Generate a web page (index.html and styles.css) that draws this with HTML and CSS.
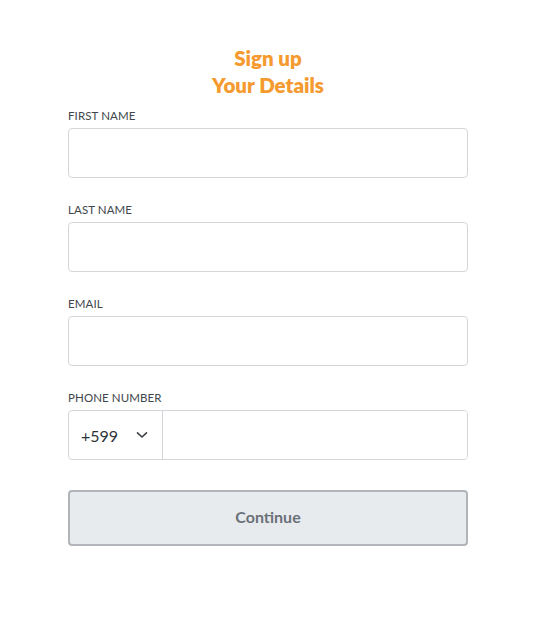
FILE: index.html
```html
<!DOCTYPE html>
<html lang="en">
<head>
<meta charset="utf-8">
<title>Sign up</title>
<link rel="stylesheet" href="styles.css">
</head>
<body>
<main class="page">
  <h1 class="title">Sign up<br>Your Details</h1>
  <form class="form">
    <div class="field">
      <label class="label" for="fn">FIRST NAME</label>
      <input class="input" id="fn" type="text">
    </div>
    <div class="field">
      <label class="label" for="ln">LAST NAME</label>
      <input class="input" id="ln" type="text">
    </div>
    <div class="field">
      <label class="label" for="em">EMAIL</label>
      <input class="input" id="em" type="email">
    </div>
    <div class="field">
      <label class="label" for="ph">PHONE NUMBER</label>
      <div class="phone">
        <div class="country">
          <span class="code">+599</span>
          <svg class="chev" width="12" height="8" viewBox="0 0 12 8"><path d="M1.5 1.8 L6 6 L10.5 1.8" fill="none" stroke="#3b4046" stroke-width="1.6" stroke-linecap="round" stroke-linejoin="round"/></svg>
        </div>
        <input class="phone-input" id="ph" type="tel">
      </div>
    </div>
    <button class="btn" type="button">Continue</button>
  </form>
</main>
</body>
</html>
```
FILE: styles.css
```css
* { box-sizing: border-box; }
body {
  margin: 0;
  background: #fff;
  font-family: Lato, "Noto Sans", sans-serif;
  color: #3b4046;
}
.page {
  padding: 45px 72px 0 68px;
}
.title {
  margin: 0;
  text-align: center;
  font-size: 20.5px;
  line-height: 27px;
  font-weight: 800;
  color: #f59a2f;
}
.form {
  display: flex;
  flex-direction: column;
  gap: 24px;
  margin-top: 9px;
}
.field {
  display: flex;
  flex-direction: column;
  gap: 4px;
}
.label {
  font-size: 11.5px;
  line-height: 16px;
  color: #41464c;
  letter-spacing: 0.1px;
}
.input {
  height: 50px;
  border: 1px solid #d3d6da;
  border-radius: 4px;
  background: #fff;
  font: inherit;
  outline: none;
}
.phone {
  display: flex;
  height: 50px;
  border: 1px solid #d3d6da;
  border-radius: 4px;
  overflow: hidden;
}
.country {
  width: 94px;
  flex: none;
  display: flex;
  align-items: center;
  justify-content: space-between;
  padding: 0 14px 0 12px;
  border-right: 1px solid #d3d6da;
}
.code {
  font-size: 16px;
  color: #2f3439;
}
.chev { display: block; }
.phone-input {
  flex: 1;
  border: 0;
  outline: none;
  font: inherit;
}
.btn {
  margin-top: 6px;
  height: 56px;
  padding: 0 0 3px;
  border: 2px solid #b1b5b9;
  border-radius: 4px;
  background: #e8ebee;
  color: #6b7178;
  font-family: Lato, "Noto Sans", sans-serif;
  font-size: 16px;
  font-weight: 700;
}
```
